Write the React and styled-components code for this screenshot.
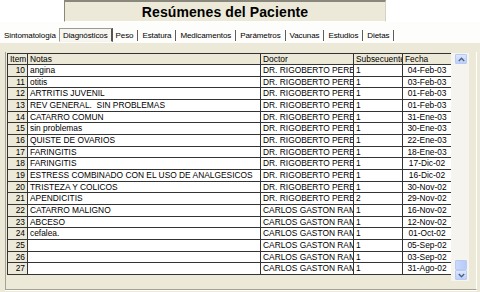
import React from "react";
import styled, { createGlobalStyle } from "styled-components";

const Global = createGlobalStyle`
  html, body { margin: 0; padding: 0; background: #ffffff; }
  body { font-family: "Liberation Sans", Arial, sans-serif; }
  * { box-sizing: border-box; }
`;

const Page = styled.div`
  width: 480px;
  height: 292px;
  overflow: hidden;
  background: #ffffff;
  display: flex;
  flex-direction: column;
`;

const TitleRow = styled.div`
  height: 22px;
  padding-left: 64px;
  display: flex;
`;

const TitleBox = styled.div`
  width: 322px;
  height: 22px;
  background: #ece9d8;
  border-top: 2px solid #8a877c;
  border-left: 1px solid #8a877c;
  border-bottom: 1px solid #ffffff;
  border-right: 1px solid #d6d3c6;
  display: flex;
  align-items: center;
  justify-content: center;
  font-size: 14px;
  font-weight: bold;
  color: #000;
  letter-spacing: 0.1px;
`;

const TabStrip = styled.div`
  height: 21px;
  padding: 0 0 1px 0;
  display: flex;
  align-items: flex-end;
  background: #fdfdfb;
`;

const Tab = styled.div`
  height: 14px;
  padding: 0 ${(p) => (p.$first ? "3px 0 4px" : "4px 0 3px")};
  display: flex;
  align-items: center;
  font-size: 8px;
  letter-spacing: -0.1px;
  color: #000;
  white-space: nowrap;
  ${(p) =>
    p.$active
      ? `
    padding: 0 3px 0 3px;
    border-top: 1px solid #9c9a92;
    border-left: 1px solid #9c9a92;
    border-right: 2px solid #55544f;
    border-bottom: 1px solid #f4f3ee;
    background: #f7f6f1;
  `
      : ""}
`;

const Sep = styled.div`
  width: 2px;
  height: 11px;
  margin-bottom: 1px;
  border-left: 1px solid #5e5d58;
  border-right: 1px solid #ffffff;
`;

const Panel = styled.div`
  flex: 1;
  background: #ece9d8;
  padding: 9px 3px 2px 5px;
  display: flex;
`;

const Frame = styled.div`
  flex: 1;
  border-left: 1px solid #a5a293;
  border-bottom: 1px solid #a5a293;
  border-right: 1px solid #ffffff;
  box-shadow: 0 1px 0 #ffffff;
  padding: 1px 6px 0 1px;
  display: flex;
  align-items: flex-start;
`;

const Grid = styled.div`
  width: 462px;
  height: 228px;
  display: flex;
  background: #ece9d8;
`;

const Table = styled.div`
  width: 444px;
  display: flex;
  flex-direction: column;
  border-left: 1px solid #333333;
  border-top: 1px solid #333333;
  align-self: flex-start;
`;

const Row = styled.div`
  display: flex;
  height: ${(p) => (p.$header ? "11px" : "11.67px")};
`;

const Cell = styled.div`
  width: ${(p) => p.$w}px;
  flex: none;
  height: 100%;
  border-right: 1px solid #333333;
  border-bottom: 1px solid #333333;
  background: ${(p) => (p.$fixed ? "#ece9d8" : "#ffffff")};
  font-size: 8.4px;
  line-height: 10px;
  color: #000;
  white-space: pre;
  overflow: hidden;
  text-align: ${(p) => p.$align || "left"};
  padding: 0 2px;
`;

const Scroll = styled.div`
  width: 18px;
  height: 228px;
  background: #f5f4ef;
  padding: 1px 2px 1px 4px;
  display: flex;
  flex-direction: column;
  justify-content: space-between;
`;

const ScrollBtn = styled.div`
  width: 12px;
  height: 10px;
  border: 1px solid #b9cbf3;
  border-radius: 1px;
  background: linear-gradient(#dde7fd, #bccffa);
  display: flex;
  align-items: center;
  justify-content: center;
`;

const Thumb = styled.div`
  width: 12px;
  height: 10px;
  border: 1px solid #b9cbf3;
  border-radius: 1px;
  background: linear-gradient(90deg, #c9d8fc, #b7cbf8);
`;

const Lower = styled.div`
  display: flex;
  flex-direction: column;
`;

const Chevron = ({ up }) => (
  <svg width="7" height="5" viewBox="0 0 7 5">
    <path
      d={up ? "M0.8 4 L3.5 1.3 L6.2 4" : "M0.8 1 L3.5 3.7 L6.2 1"}
      fill="none"
      stroke="#4d6185"
      strokeWidth="1.4"
    />
  </svg>
);

const cols = [
  { key: "item", label: "Item", w: 20 },
  { key: "nota", label: "Notas", w: 233 },
  { key: "doc", label: "Doctor", w: 93 },
  { key: "sub", label: "Subsecuente", w: 49 },
  { key: "fecha", label: "Fecha", w: 49 },
];

const RP = "DR. RIGOBERTO PEREZ";
const CG = "CARLOS GASTON RAMIREZ";

const rows = [
  [10, "angina", RP, "1", "04-Feb-03"],
  [11, "otitis", RP, "1", "03-Feb-03"],
  [12, "ARTRITIS JUVENIL", RP, "1", "01-Feb-03"],
  [13, "REV GENERAL.  SIN PROBLEMAS", RP, "1", "01-Feb-03"],
  [14, "CATARRO COMUN", RP, "1", "31-Ene-03"],
  [15, "sin problemas", RP, "1", "30-Ene-03"],
  [16, "QUISTE DE OVARIOS", RP, "1", "22-Ene-03"],
  [17, "FARINGITIS", RP, "1", "18-Ene-03"],
  [18, "FARINGITIS", RP, "1", "17-Dic-02"],
  [19, "ESTRESS COMBINADO CON EL USO DE ANALGESICOS", RP, "1", "16-Dic-02"],
  [20, "TRISTEZA Y COLICOS", RP, "1", "30-Nov-02"],
  [21, "APENDICITIS", RP, "2", "29-Nov-02"],
  [22, "CATARRO MALIGNO", CG, "1", "16-Nov-02"],
  [23, "ABCESO", CG, "1", "12-Nov-02"],
  [24, "cefalea.", CG, "1", "01-Oct-02"],
  [25, "", CG, "1", "05-Sep-02"],
  [26, "", CG, "1", "03-Sep-02"],
  [27, "", CG, "1", "31-Ago-02"],
];

const tabs = [
  "Peso",
  "Estatura",
  "Medicamentos",
  "Parámetros",
  "Vacunas",
  "Estudios",
  "Dietas",
];

export default function App() {
  return (
    <Page>
      <Global />
      <TitleRow>
        <TitleBox>Resúmenes del Paciente</TitleBox>
      </TitleRow>
      <TabStrip>
        <Tab $first>Sintomatología</Tab>
        <Tab $active>Diagnósticos</Tab>
        {tabs.map((t) => (
          <React.Fragment key={t}>
            <Tab>{t}</Tab>
            <Sep />
          </React.Fragment>
        ))}
      </TabStrip>
      <Panel>
        <Frame>
          <Grid>
            <Table>
              <Row $header>
                {cols.map((c) => (
                  <Cell key={c.key} $w={c.w} $fixed>
                    {c.label}
                  </Cell>
                ))}
              </Row>
              {rows.map((r) => (
                <Row key={r[0]}>
                  <Cell $w={20} $fixed $align="right">
                    {r[0]}
                  </Cell>
                  <Cell $w={233}>{r[1]}</Cell>
                  <Cell $w={93}>{r[2]}</Cell>
                  <Cell $w={49}>{r[3]}</Cell>
                  <Cell $w={49} $align="center">
                    {r[4]}
                  </Cell>
                </Row>
              ))}
            </Table>
            <Scroll>
              <ScrollBtn>
                <Chevron up />
              </ScrollBtn>
              <Lower>
                <Thumb />
                <ScrollBtn>
                  <Chevron />
                </ScrollBtn>
              </Lower>
            </Scroll>
          </Grid>
        </Frame>
      </Panel>
    </Page>
  );
}
